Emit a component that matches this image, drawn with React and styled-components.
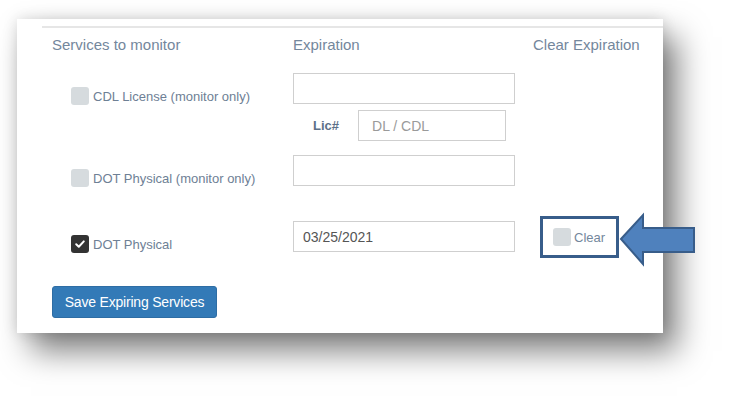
import React from "react";
import styled, { createGlobalStyle } from "styled-components";

const GlobalStyle = createGlobalStyle`
  body {
    margin: 0;
    background: #ffffff;
    font-family: "Liberation Sans", Arial, sans-serif;
  }
`;

const rows = [
  { label: "CDL License (monitor only)", value: "", lic: true },
  { label: "DOT Physical (monitor only)", value: "", spaced: true },
  { label: "DOT Physical", value: "03/25/2021", checked: true, clear: true },
];

export default function App() {
  return (
    <Page>
      <GlobalStyle />
      <Panel>
        <Inner>
          <HeaderRow>
            <Heading>Services to monitor</Heading>
            <Heading>Expiration</Heading>
            <Heading>Clear Expiration</Heading>
          </HeaderRow>

          {rows.map((r, i) => (
            <Row key={i} spaced={r.spaced}>
              <Service>
                <Box checked={r.checked}>
                  {r.checked ? (
                    <svg width="12" height="12" viewBox="0 0 12 12">
                      <path
                        d="M2.2 6.2 L4.8 8.7 L9.8 3.4"
                        fill="none"
                        stroke="#fff"
                        strokeWidth="2"
                        strokeLinecap="round"
                        strokeLinejoin="round"
                      />
                    </svg>
                  ) : null}
                </Box>
                <ServiceLabel>{r.label}</ServiceLabel>
              </Service>
              <DateCol>
                <TextInput defaultValue={r.value} />
                {r.lic ? (
                  <LicRow>
                    <LicLabel>Lic#</LicLabel>
                    <LicInput placeholder="DL / CDL" />
                  </LicRow>
                ) : null}
              </DateCol>
              <div>
                {r.clear ? (
                  <ClearBox>
                    <Box />
                    <ClearLabel>Clear</ClearLabel>
                    <Arrow width="80" height="54" viewBox="0 0 80 54">
                      <polygon
                        points="2,26 24,2 24,15 75,15 75,39 24,39 24,51"
                        fill="#4f81bd"
                        stroke="#385d8a"
                        strokeWidth="2"
                        strokeLinejoin="miter"
                      />
                    </Arrow>
                  </ClearBox>
                ) : null}
              </div>
            </Row>
          ))}

          <SaveButton>Save Expiring Services</SaveButton>
        </Inner>
      </Panel>
    </Page>
  );
}

const Page = styled.div`
  width: 739px;
  height: 403px;
  padding: 19px 0 0 17px;
  box-sizing: border-box;
`;

const Panel = styled.div`
  width: 646px;
  height: 314px;
  background: #fff;
  padding: 7px 0 0 25px;
  box-sizing: border-box;
  box-shadow: 0 0 14px rgba(0, 0, 0, 0.14), 14px 18px 30px rgba(0, 0, 0, 0.5);
`;

const Inner = styled.div`
  border-top: 2px solid #e6e6e6;
  padding: 7px 0 0 10px;
  display: flex;
  flex-direction: column;
  align-items: flex-start;
`;

const HeaderRow = styled.div`
  display: grid;
  grid-template-columns: 241px 240px auto;
  width: 100%;
  margin-bottom: 18px;
`;

const Heading = styled.div`
  font-size: 15px;
  line-height: 20px;
  color: #74879c;
`;

const Row = styled.div`
  display: grid;
  grid-template-columns: 241px 240px auto;
  align-items: start;
  width: 100%;
  margin-bottom: ${({ spaced }) => (spaced ? "34px" : "14px")};
`;

const Service = styled.div`
  display: flex;
  align-items: center;
  gap: 4px;
  padding: 14px 0 0 19px;
`;

const Box = styled.span`
  width: 18px;
  height: 18px;
  border-radius: 3px;
  background: ${({ checked }) => (checked ? "#333333" : "#d6dbde")};
  display: inline-flex;
  align-items: center;
  justify-content: center;
  flex-shrink: 0;
`;

const ServiceLabel = styled.span`
  font-size: 13px;
  color: #6e8095;
`;

const DateCol = styled.div`
  display: flex;
  flex-direction: column;
  align-items: flex-start;
`;

const TextInput = styled.input`
  width: 222px;
  height: 31px;
  box-sizing: border-box;
  border: 1px solid #cfcfcf;
  padding: 0 9px;
  font-family: "Liberation Sans", Arial, sans-serif;
  font-size: 14px;
  color: #555;
  outline: none;
`;

const LicRow = styled.div`
  display: flex;
  align-items: center;
  margin-top: 6px;
  padding-left: 20px;
  gap: 19px;
`;

const LicLabel = styled.span`
  font-size: 13px;
  font-weight: bold;
  color: #5c7088;
`;

const LicInput = styled.input`
  width: 148px;
  height: 31px;
  box-sizing: border-box;
  border: 1px solid #cfcfcf;
  padding: 0 13px;
  font-family: "Liberation Sans", Arial, sans-serif;
  font-size: 14px;
  outline: none;
  &::placeholder {
    color: #9a9a9a;
  }
`;

const ClearBox = styled.div`
  position: relative;
  display: inline-flex;
  align-items: center;
  gap: 3px;
  margin: -5px 0 0 7px;
  width: 79px;
  height: 42px;
  box-sizing: border-box;
  border: 3px solid #385d8a;
  padding-left: 10px;
`;

const ClearLabel = styled.span`
  font-size: 13px;
  color: #74879c;
`;

const Arrow = styled.svg`
  position: absolute;
  left: 76px;
  top: -6px;
  overflow: visible;
`;

const SaveButton = styled.button`
  margin-top: 14px;
  width: 165px;
  height: 32px;
  background: #337ab7;
  border: 1px solid #2e6da4;
  border-radius: 3px;
  color: #fff;
  font-family: "Liberation Sans", Arial, sans-serif;
  font-size: 14px;
  letter-spacing: -0.2px;
  padding: 0;
`;
